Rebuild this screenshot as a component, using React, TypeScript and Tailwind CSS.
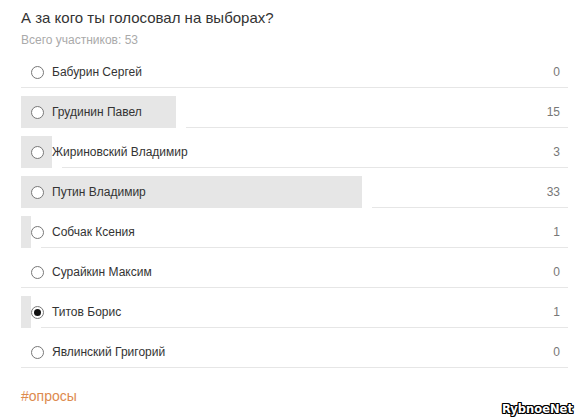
import React from "react";

const rows = [
  { name: "Бабурин Сергей", votes: 0 },
  { name: "Грудинин Павел", votes: 15 },
  { name: "Жириновский Владимир", votes: 3 },
  { name: "Путин Владимир", votes: 33 },
  { name: "Собчак Ксения", votes: 1 },
  { name: "Сурайкин Максим", votes: 0 },
  { name: "Титов Борис", votes: 1, checked: true },
  { name: "Явлинский Григорий", votes: 0 },
];

const TOTAL = 53;
const WIDTH = 547;

export default function App() {
  return (
    <div
      className="relative w-[580px] h-[417px] bg-white overflow-hidden"
      style={{ fontFamily: '"Liberation Sans", Arial, sans-serif' }}
    >
      <div className="ml-[21px] w-[547px] pt-[9px]">
        <div className="text-[15px] leading-[18px] text-[#333]">
          А за кого ты голосовал на выборах?
        </div>
        <div className="mt-[6px] text-[12px] leading-[14px] text-[#aaa]">
          Всего участников: 53
        </div>
        <div className="mt-[1px]">
          {rows.map((r) => {
            const w = Math.round((r.votes / TOTAL) * WIDTH);
            return (
              <div key={r.name} className="relative h-[40px]">
                {w > 0 && (
                  <div
                    className="absolute left-0 top-[8px] bottom-0 bg-[#e6e6e6]"
                    style={{ width: w }}
                  />
                )}
                <div
                  className="absolute bottom-0 right-0 h-px bg-[#e6e6e6]"
                  style={{ left: w > 0 ? w + 10 : 0 }}
                />
                <div className="relative flex h-full items-center pt-[8px] pl-[10px] pr-[8px]">
                  <span className="flex h-[13px] w-[13px] items-center justify-center rounded-full border border-[#777] bg-white">
                    {r.checked && (
                      <span className="h-[7px] w-[7px] rounded-full bg-[#111]" />
                    )}
                  </span>
                  <span className="ml-[8px] text-[12px] text-[#333]">
                    {r.name}
                  </span>
                  <span className="ml-auto text-[12px] text-[#777]">
                    {r.votes}
                  </span>
                </div>
              </div>
            );
          })}
        </div>
        <div className="mt-[20px] text-[14px] leading-[16px] text-[#dd8a4e]">
          #опросы
        </div>
      </div>
      <div
        className="absolute left-[502px] top-[402px] text-[11.5px] font-bold leading-[14px] text-white [text-shadow:1px_0_0_#000,-1px_0_0_#000,0_1px_0_#000,0_-1px_0_#000,1px_1px_0_#000,-1px_-1px_0_#000,1px_-1px_0_#000,-1px_1px_0_#000]"
        style={{ fontFamily: '"DejaVu Sans", sans-serif' }}
      >
        RybnoeNet
      </div>
    </div>
  );
}
